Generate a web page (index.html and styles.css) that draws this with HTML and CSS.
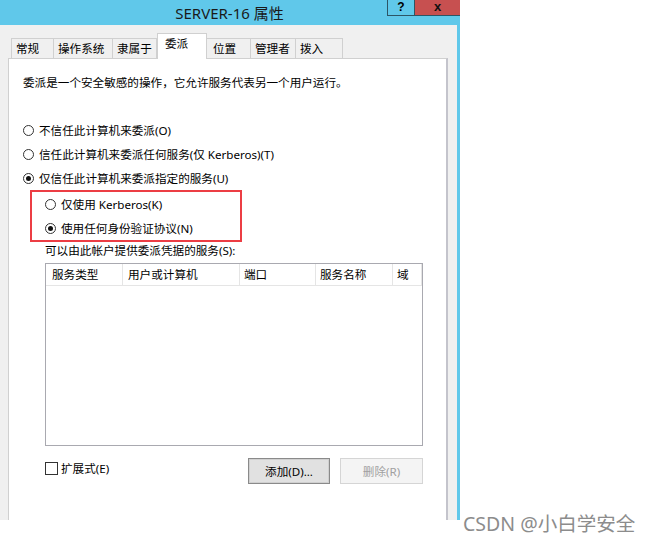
FILE: index.html
```html
<!DOCTYPE html>
<html lang="zh">
<head>
<meta charset="utf-8">
<title>SERVER-16 属性</title>
<link rel="stylesheet" href="styles.css">
</head>
<body>
<div class="window">
  <div class="titlebar">
    <div class="title">SERVER-16 属性</div>
    <div class="tb-buttons">
      <div class="tb-help">?</div>
      <div class="tb-close">x</div>
    </div>
  </div>
  <div class="client">
    <div class="tabs">
      <div class="tab w1">常规</div>
      <div class="tab w2">操作系统</div>
      <div class="tab w3">隶属于</div>
      <div class="tab active w4">委派</div>
      <div class="tab w5">位置</div>
      <div class="tab w6">管理者</div>
      <div class="tab w7">拨入</div>
    </div>
    <div class="panel">
      <div class="desc">委派是一个安全敏感的操作，它允许服务代表另一个用户运行。</div>
      <div class="radios">
        <div class="radio-row"><span class="radio"></span><span>不信任此计算机来委派(O)</span></div>
        <div class="radio-row"><span class="radio"></span><span>信任此计算机来委派任何服务(仅 Kerberos)(T)</span></div>
        <div class="radio-row"><span class="radio checked"></span><span>仅信任此计算机来委派指定的服务(U)</span></div>
      </div>
      <div class="highlight">
        <div class="radio-row"><span class="radio"></span><span>仅使用 Kerberos(K)</span></div>
        <div class="radio-row"><span class="radio checked"></span><span>使用任何身份验证协议(N)</span></div>
      </div>
      <div class="services-label">可以由此帐户提供委派凭据的服务(S):</div>
      <div class="listbox">
        <div class="list-header">
          <div class="col c1">服务类型</div>
          <div class="col c2">用户或计算机</div>
          <div class="col c3">端口</div>
          <div class="col c4">服务名称</div>
          <div class="col c5">域</div>
        </div>
      </div>
      <div class="bottom-row">
        <label class="check-row"><span class="checkbox"></span><span>扩展式(E)</span></label>
        <div class="buttons">
          <div class="btn primary">添加(D)...</div>
          <div class="btn disabled">删除(R)</div>
        </div>
      </div>
    </div>
  </div>
</div>
<div class="watermark">CSDN @小白学安全</div>
</body>
</html>
```

FILE: styles.css
```css
html, body {
  margin: 0;
  padding: 0;
  background: #ffffff;
}
body {
  width: 650px;
  height: 543px;
  position: relative;
  overflow: hidden;
  font-family: "Noto Sans", "Noto Sans CJK SC", sans-serif;
  font-size: 11.6px;
  color: #000;
}
.window {
  width: 457px;
  height: 520px;
  background: #f0f0f0;
  border-right: 3px solid #60c8ea;
  display: flex;
  flex-direction: column;
}
.titlebar {
  height: 25px;
  background: #60c8ea;
  position: relative;
  display: flex;
  align-items: center;
  justify-content: center;
}
.title {
  font-size: 15px;
  color: #1a1a1a;
  margin-left: 2px;
}
.tb-buttons {
  position: absolute;
  top: 0;
  left: 387px;
  display: flex;
}
.tb-help {
  width: 26px;
  height: 15px;
  border-left: 1px solid #2c5566;
  border-bottom: 1px solid #2c5566;
  background: #60c8ea;
  font-family: "Liberation Sans", sans-serif;
  font-weight: bold;
  font-size: 12px;
  line-height: 15px;
  text-align: center;
}
.tb-close {
  width: 45px;
  height: 15px;
  border-left: 1px solid #2c5566;
  border-bottom: 1px solid #2c5566;
  background: #c75050;
  font-family: "Liberation Sans", sans-serif;
  font-weight: bold;
  font-size: 13px;
  line-height: 13px;
  text-align: center;
  color: #111;
}
.client {
  flex: 1;
  display: flex;
  flex-direction: column;
  padding-top: 8px;
}
.tabs {
  display: flex;
  align-items: flex-end;
  margin-left: 11px;
  height: 25px;
  position: relative;
  z-index: 1;
}
.tab {
  height: 20px;
  box-sizing: border-box;
  border: 1px solid #d0d0d0;
  border-bottom: none;
  border-left: none;
  background: #f0f0f0;
  padding-left: 4px;
  line-height: 20px;
}
.tab.w1 { width: 43px; border-left: 1px solid #d0d0d0; }
.tab.w2 { width: 59px; }
.tab.w3 { width: 44px; }
.tab.w4 { width: 50px; }
.tab.w5 { width: 44px; padding-left: 6px; }
.tab.w6 { width: 45px; }
.tab.w7 { width: 47px; }
.tab.active {
  height: 26px;
  background: #ffffff;
  border-left: 1px solid #d0d0d0;
  margin-bottom: -1px;
  padding-left: 7px;
  line-height: 20px;
}
.panel {
  margin-left: 8px;
  width: 440px;
  flex: 1;
  background: #ffffff;
  border: 1px solid #d0d0d0;
  border-right: 2px solid #c4c4cc;
  border-bottom: none;
  padding: 16px 0 0 14px;
  box-sizing: border-box;
  display: flex;
  flex-direction: column;
}
.desc {
  height: 16px;
  line-height: 16px;
}
.radios {
  margin-top: 27px;
  display: flex;
  flex-direction: column;
}
.radio-row {
  height: 24px;
  display: flex;
  align-items: center;
  gap: 5px;
}
.radio {
  width: 9px;
  height: 9px;
  border: 1px solid #333;
  border-radius: 50%;
  background: #fff;
  display: flex;
  align-items: center;
  justify-content: center;
  flex: none;
}
.radio.checked::after {
  content: "";
  width: 5px;
  height: 5px;
  border-radius: 50%;
  background: #111;
}
.highlight {
  margin-left: 7px;
  width: 212px;
  height: 52px;
  box-sizing: border-box;
  border: 2px solid #ec3d44;
  padding-left: 13px;
  display: flex;
  flex-direction: column;
}
.services-label {
  margin-top: 1px;
  margin-left: 22px;
  height: 16px;
  line-height: 16px;
}
.listbox {
  margin-top: 4px;
  margin-left: 22px;
  width: 378px;
  height: 183px;
  box-sizing: border-box;
  border: 1px solid #a9a9b0;
  background: #fff;
}
.list-header {
  display: flex;
  height: 21px;
  border-bottom: 1px solid #e5e5e5;
}
.col {
  box-sizing: border-box;
  border-right: 1px solid #e5e5e5;
  line-height: 21px;
  padding-left: 6px;
}
.c1 { width: 77px; }
.c2 { width: 117px; padding-left: 5px; }
.c3 { width: 76px; padding-left: 4px; }
.c4 { width: 77px; padding-left: 4px; }
.c5 { width: 29px; padding-left: 4px; }
.bottom-row {
  margin-top: 12px;
  margin-left: 22px;
  width: 378px;
  display: flex;
  justify-content: space-between;
  align-items: flex-start;
}
.check-row {
  display: flex;
  align-items: center;
  gap: 3px;
  height: 20px;
}
.checkbox {
  width: 11px;
  height: 11px;
  border: 1px solid #333;
  background: #fff;
}
.buttons {
  display: flex;
  gap: 10px;
}
.btn {
  height: 26px;
  box-sizing: border-box;
  display: flex;
  align-items: center;
  justify-content: center;
}
.btn.primary {
  width: 82px;
  background: #e1e1e1;
  border: 1px solid #8a8a8a;
  box-shadow: inset 0 0 0 1px #d0d0d0;
}
.btn.disabled {
  width: 83px;
  background: #f4f4f4;
  border: 1px solid #d5d5d5;
  color: #a0a0a0;
}
.watermark {
  position: absolute;
  left: 463px;
  top: 511px;
  font-size: 19.5px;
  line-height: 26px;
  color: #8c8c8c;
  white-space: nowrap;
}
```
